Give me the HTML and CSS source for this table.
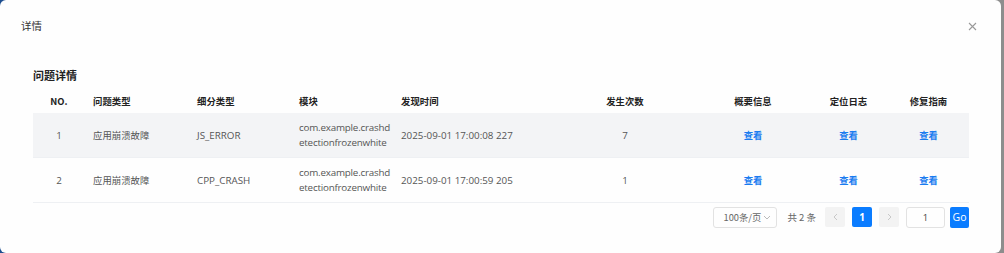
FILE: index.html
```html
<!DOCTYPE html>
<html lang="zh">
<head>
<meta charset="utf-8">
<link rel="stylesheet" href="styles.css">
</head>
<body>
<div class="dialog">
  <div class="dialog-header">
    <span class="dialog-title">详情</span>
    <svg class="close" width="9" height="9" viewBox="0 0 9 9"><path d="M1 1L8 8M8 1L1 8" stroke="#999" stroke-width="1.1"/></svg>
  </div>
  <div class="dialog-body">
    <div class="section-title">问题详情</div>
    <table class="grid">
      <colgroup>
        <col style="width:52px"><col style="width:104px"><col style="width:102px"><col style="width:102px"><col style="width:160px"><col style="width:144px"><col style="width:112px"><col style="width:79px"><col style="width:81px">
      </colgroup>
      <thead>
        <tr>
          <th class="c">NO.</th><th>问题类型</th><th>细分类型</th><th>模块</th><th>发现时间</th><th class="c">发生次数</th><th class="c">概要信息</th><th class="c">定位日志</th><th class="c">修复指南</th>
        </tr>
      </thead>
      <tbody>
        <tr class="odd">
          <td class="c">1</td><td class="cn">应用崩溃故障</td><td>JS_ERROR</td><td class="mod">com.example.crashdetectionfrozenwhite</td><td>2025-09-01 17:00:08 227</td><td class="c">7</td><td class="c"><a class="link">查看</a></td><td class="c"><a class="link">查看</a></td><td class="c"><a class="link">查看</a></td>
        </tr>
        <tr>
          <td class="c">2</td><td class="cn">应用崩溃故障</td><td>CPP_CRASH</td><td class="mod">com.example.crashdetectionfrozenwhite</td><td>2025-09-01 17:00:59 205</td><td class="c">1</td><td class="c"><a class="link">查看</a></td><td class="c"><a class="link">查看</a></td><td class="c"><a class="link">查看</a></td>
        </tr>
      </tbody>
    </table>
    <div class="pager">
      <div class="size-select"><span>100条/页</span><svg width="8" height="5" viewBox="0 0 8 5"><path d="M1 1L4 4L7 1" fill="none" stroke="#bbb" stroke-width="1"/></svg></div>
      <span class="total">共 2 条</span>
      <span class="pbtn disabled"><svg width="5" height="8" viewBox="0 0 5 8"><path d="M4 1L1 4L4 7" fill="none" stroke="#c8c8c8" stroke-width="1"/></svg></span>
      <span class="pbtn active">1</span>
      <span class="pbtn disabled"><svg width="5" height="8" viewBox="0 0 5 8"><path d="M1 1L4 4L1 7" fill="none" stroke="#c8c8c8" stroke-width="1"/></svg></span>
      <span class="jump">1</span>
      <span class="go">Go</span>
    </div>
  </div>
</div>
</body>
</html>
```

FILE: styles.css
```css
html, body {
  margin: 0;
  padding: 0;
  height: 253px;
  overflow: hidden;
}
body {
  background: linear-gradient(to right, #1d4e8f 0 20px, #8d8d8d 20px);
  font-family: "Noto Sans CJK SC", "Open Sans", sans-serif;
}
.dialog {
  width: 1001px;
  height: 253px;
  background: #fefefe;
  border-radius: 6px;
  box-sizing: border-box;
}
.dialog-header {
  height: 50px;
  display: flex;
  align-items: center;
  justify-content: space-between;
  padding: 0 24px 0 21px;
}
.dialog-title {
  font-size: 10.5px;
  color: #333;
  margin-top: 1px;
}
.close {
  margin-top: 2px;
}
.dialog-body {
  padding: 14px 32px 0 33px;
}
.section-title {
  font-size: 11px;
  font-weight: 700;
  color: #222;
  height: 24px;
  line-height: 22px;
}
.grid {
  border-collapse: collapse;
  table-layout: fixed;
  width: 936px;
}
.grid th {
  height: 25px;
  font-size: 9.4px;
  font-weight: 700;
  color: #222;
  text-align: left;
  padding: 0 4px 0 8px;
  vertical-align: middle;
}
.grid td {
  height: 44px;
  font-size: 9.8px;
  color: #555;
  padding: 0 2px 0 8px;
  font-family: "Open Sans", "Noto Sans CJK SC", sans-serif;
  border-bottom: 1px solid #eef0f3;
  vertical-align: middle;
  line-height: 15px;
}
.grid td.cn {
  font-family: "Noto Sans CJK SC", sans-serif;
  font-size: 9.4px;
}
.grid .c {
  text-align: center;
  padding: 0;
}
.grid tr.odd td {
  background: #f3f4f6;
}
.grid td.mod {
  word-break: break-all;
  padding-right: 0;
  letter-spacing: -0.2px;
}
.link {
  color: #1a7cf0;
  font-weight: 700;
  font-size: 9.3px;
  font-family: "Noto Sans CJK SC", sans-serif;
}
.pager {
  display: flex;
  justify-content: flex-end;
  align-items: center;
  margin-top: 3px;
  height: 22px;
  font-size: 9.5px;
  color: #555;
}
.size-select {
  width: 64px;
  height: 21px;
  box-sizing: border-box;
  border: 1px solid #e2e2e2;
  border-radius: 3px;
  display: flex;
  align-items: center;
  justify-content: space-between;
  padding: 0 5px 0 9px;
  color: #666;
  font-size: 9.3px;
  margin-right: 10px;
}
.total {
  margin-right: 9px;
  color: #666;
}
.pbtn {
  width: 20px;
  height: 20px;
  border-radius: 2px;
  display: flex;
  align-items: center;
  justify-content: center;
  margin-right: 7px;
  font-family: "Open Sans", sans-serif;
}
.pbtn.disabled {
  background: #f3f3f3;
}
.pbtn.active {
  background: #0a7cff;
  color: #fff;
  font-weight: 700;
  font-size: 10px;
}
.jump {
  width: 39px;
  height: 21px;
  box-sizing: border-box;
  border: 1px solid #e2e2e2;
  border-radius: 3px;
  display: flex;
  align-items: center;
  justify-content: center;
  margin-right: 5px;
  font-family: "Open Sans", sans-serif;
  color: #444;
}
.go {
  width: 19px;
  height: 21px;
  background: #0a7cff;
  color: #fff;
  border-radius: 2px;
  display: flex;
  align-items: center;
  justify-content: center;
  font-family: "Open Sans", sans-serif;
  font-size: 10.5px;
}
```
